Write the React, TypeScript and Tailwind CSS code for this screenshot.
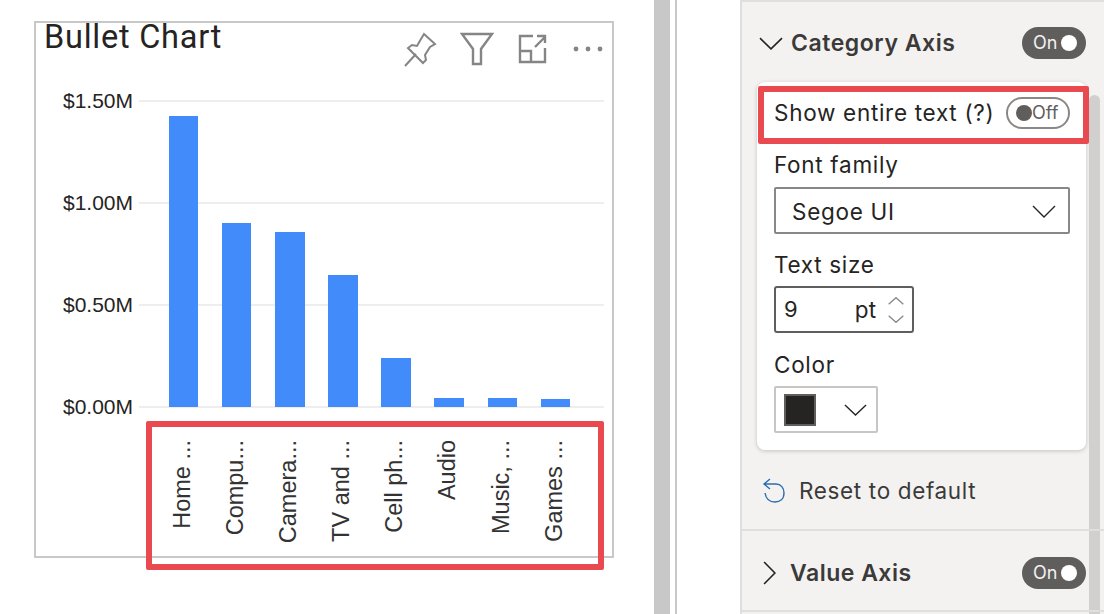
const TICKS = [
  { label: '$1.50M', y: 101 },
  { label: '$1.00M', y: 203 },
  { label: '$0.50M', y: 305 },
  { label: '$0.00M', y: 407 },
]

const BARS = [
  { x: 169, w: 29, top: 116, label: 'Home ...', tx: 190 },
  { x: 222, w: 29, top: 223, label: 'Compu...', tx: 243 },
  { x: 275, w: 30, top: 232, label: 'Camera...', tx: 296 },
  { x: 328, w: 30, top: 275, label: 'TV and ...', tx: 349 },
  { x: 381, w: 30, top: 358, label: 'Cell ph...', tx: 402 },
  { x: 434, w: 30, top: 398, label: 'Audio', tx: 455 },
  { x: 488, w: 29, top: 398, label: 'Music, ...', tx: 509 },
  { x: 541, w: 29, top: 399, label: 'Games ...', tx: 562 },
]

function ChartArea() {
  // svg is offset by the box position so coordinates read as page pixels
  return (
    <svg viewBox="36 23 576 533" className="block h-[533px] w-[576px]">
      {TICKS.map(t => (
        <g key={t.label}>
          <line x1="139" x2="604" y1={t.y} y2={t.y} stroke="#eeeeee" strokeWidth="2" />
          <text x="133" y={t.y + 7} textAnchor="end" fontSize="21" fill="#252423" fontFamily="'Liberation Sans', sans-serif">
            {t.label}
          </text>
        </g>
      ))}
      {BARS.map(b => (
        <g key={b.label}>
          <rect x={b.x} y={b.top} width={b.w} height={407 - b.top} fill="#418bfb" />
          <text
            transform={`translate(${b.tx} 440) rotate(-90)`}
            textAnchor="end"
            fontSize="23.5"
            fill="#333333"
            fontFamily="'Liberation Sans', sans-serif"
          >
            {b.label}
          </text>
        </g>
      ))}
    </svg>
  )
}

function VisualIcons() {
  return (
    <div className="absolute right-[9px] top-[8px] flex items-center gap-[23px] text-[#858585]">
      <svg width="33" height="35" viewBox="0 0 33 35" fill="none" stroke="currentColor" strokeWidth="2">
        <path d="M1 34 L12 22 M20 2 L31 12 L26 15 L21 23 L22 28 L19 31 L4 16 L8 13 L13 14 L17 7 Z" />
      </svg>
      <svg width="34" height="36" viewBox="0 0 34 36" fill="none" stroke="currentColor" strokeWidth="2.4">
        <path d="M2 3 H32 L21 18 V33 H13 V18 Z" />
      </svg>
      <svg width="29" height="30" viewBox="0 0 29 30" fill="none" stroke="currentColor" strokeWidth="2.4" className="ml-[1px]">
        <path d="M27 14 V28 H2 V2 H15 M2 17 H13 V28 M17 13 L27 3 M19 2 H27 V9" />
      </svg>
      <svg width="30" height="6" viewBox="0 0 30 6" fill="currentColor" className="ml-[3px]">
        <circle cx="3" cy="3" r="2.4" />
        <circle cx="15" cy="3" r="2.4" />
        <circle cx="27" cy="3" r="2.4" />
      </svg>
    </div>
  )
}

function Chevron({ points, className, width = 1.6 }: { points: string; className: string; width?: number }) {
  return (
    <svg viewBox="0 0 24 24" preserveAspectRatio="none" fill="none" stroke="currentColor" strokeWidth={width} className={className}>
      <polyline points={points} vectorEffect="non-scaling-stroke" />
    </svg>
  )
}

const DOWN = '1,2 12,22 23,2'
const UP = '1,22 12,2 23,22'
const RIGHT = '2,1 22,12 2,23'

function Toggle({ on }: { on: boolean }) {
  if (on) {
    return (
      <div className="flex h-[32px] w-[64px] items-center justify-between rounded-full bg-[#605e5c] pl-[11px] pr-[9px]">
        <span className="text-[18px] leading-none text-[#f3f2f1]">On</span>
        <span className="h-[16px] w-[16px] rounded-full bg-white" />
      </div>
    )
  }
  return (
    <div className="flex h-[32px] w-[64px] items-center rounded-full border-2 border-[#8a8886] bg-white pl-[8px]">
      <span className="h-[16px] w-[16px] shrink-0 rounded-full bg-[#605e5c]" />
      <span className="text-[18px] leading-none text-[#605e5c]">Off</span>
    </div>
  )
}

export default function App() {
  return (
    <div className="relative flex h-[614px] w-[1104px] overflow-hidden bg-white font-['Inter',sans-serif] text-[#252423]">
      {/* chart side */}
      <div className="w-[654px] shrink-0 pl-[34px] pt-[21px]">
        <div className="relative h-[537px] w-[580px] border-2 border-[#c8c8c8]">
          <h1 className="absolute left-[8px] top-[-6px] font-['Roboto',sans-serif] text-[32.5px] leading-[40px] tracking-[0.75px] text-[#252423]">
            Bullet Chart
          </h1>
          <VisualIcons />
          <ChartArea />
        </div>
      </div>

      <div className="h-full w-[16px] shrink-0 bg-[#c8c8c8]" />
      <div className="ml-[5px] h-full w-[2px] shrink-0 bg-[#c8c8c8]" />

      {/* format pane */}
      <div className="relative ml-[63px] h-full w-[364px] shrink-0 border-l-2 border-t-2 border-[#e1dfdd] bg-[#f3f2f1]">
        <div className="absolute bottom-0 right-[4px] top-[93px] w-[11px] rounded-t-full bg-[#d2d0ce]" />

        <div className="relative flex h-[80px] items-center justify-between pt-[2px] pl-[17px] pr-[18px]">
          <div className="flex items-center gap-[8px]">
            <Chevron points={DOWN} className="h-[13px] w-[24px]" />
            <span className="text-[23px] font-semibold tracking-[0.55px] text-[#3b3a39]">Category Axis</span>
          </div>
          <Toggle on />
        </div>

        <div className="relative ml-[15px] h-[368px] w-[329px] rounded-[8px] bg-white pl-[17px] pr-[16px] shadow-[0_1px_4px_rgba(0,0,0,0.2)]">
          <div className="flex h-[62px] items-center justify-between">
            <span className="text-[22.5px] tracking-[0.7px]">Show entire text (?)</span>
            <Toggle on={false} />
          </div>

          <div className="mt-[6px] text-[22.5px] leading-[30px] tracking-[0.7px]">Font family</div>
          <div className="mt-[7px] flex h-[47px] w-[296px] items-center justify-between rounded-[2px] border-2 border-[#8a8886] pl-[16px] pr-[12px] pt-[2px]">
            <span className="text-[22.5px] tracking-[0.7px]">Segoe UI</span>
            <Chevron points={DOWN} className="h-[13px] w-[24px]" width={1.4} />
          </div>

          <div className="mt-[16px] text-[22.5px] leading-[30px] tracking-[0.7px]">Text size</div>
          <div className="mt-[6px] flex h-[47px] w-[140px] items-center justify-between rounded-[3px] border-2 border-[#605e5c] pl-[8px] pr-[8px]">
            <span className="text-[22px]">9</span>
            <div className="flex items-center gap-[12px]">
              <span className="text-[22.5px]">pt</span>
              <div className="flex flex-col gap-[10px] text-[#8a8886]">
                <Chevron points={UP} className="h-[8px] w-[16px]" width={1.3} />
                <Chevron points={DOWN} className="h-[8px] w-[16px]" width={1.3} />
              </div>
            </div>
          </div>

          <div className="mt-[17px] text-[22.5px] leading-[30px] tracking-[0.7px]">Color</div>
          <div className="mt-[6px] flex h-[47px] w-[104px] items-center justify-between rounded-[2px] border-2 border-[#c8c6c4] pl-[8px] pr-[9px]">
            <span className="h-[32px] w-[32px] border-2 border-[#605e5c] bg-[#252423]" />
            <Chevron points={DOWN} className="h-[12px] w-[23px]" width={1.4} />
          </div>
        </div>

        <div className="relative flex h-[81px] items-center gap-[13px] border-b-2 border-[#e1dfdd] pt-[3px] pl-[20px]">
          <svg width="24" height="26" viewBox="0 0 24 26" fill="none" stroke="#2b6cb0" strokeWidth="1.4">
            <path d="M2 6 H14 C19 6 22 10 22 15 C22 21 18 24 13 24 C8 24 4 21 3 15 M8 1 L2 6 L8 11" />
          </svg>
          <span className="text-[22.5px] tracking-[0.65px] text-[#3b3a39]">Reset to default</span>
        </div>

        <div className="relative flex h-[81px] items-center justify-between border-b-2 border-[#e1dfdd] pl-[21px] pr-[18px] pt-[5px]">
          <div className="flex items-center gap-[14px]">
            <Chevron points={RIGHT} className="h-[24px] w-[13px]" />
            <span className="text-[23px] font-semibold tracking-[0.5px] text-[#3b3a39]">Value Axis</span>
          </div>
          <Toggle on />
        </div>
      </div>

      {/* annotation overlays */}
      <div className="pointer-events-none absolute left-[146px] top-[421px] h-[149px] w-[458px] rounded-[2px] border-[6px] border-[#e84a4f]" />
      <div className="pointer-events-none absolute left-[758px] top-[86px] h-[58px] w-[331px] rounded-[2px] border-[6px] border-[#e84a4f]" />
    </div>
  )
}
